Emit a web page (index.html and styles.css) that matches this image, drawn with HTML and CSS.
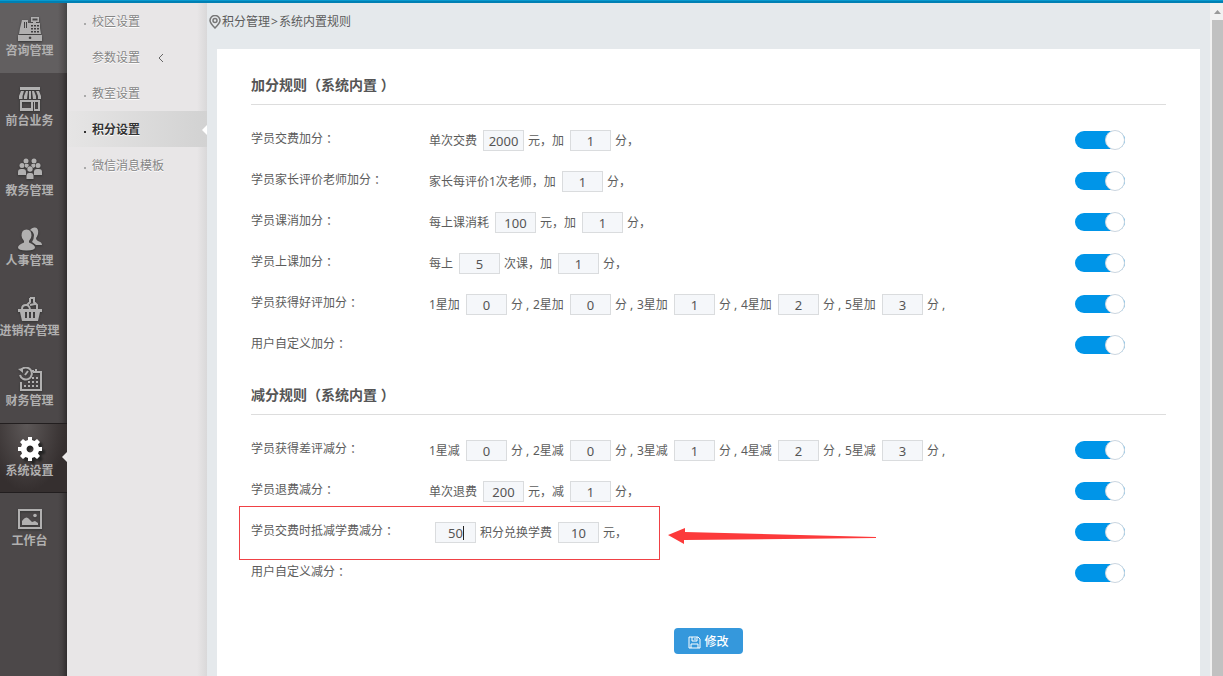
FILE: index.html
```html
<!DOCTYPE html>
<html lang="zh-CN">
<head>
<meta charset="utf-8">
<title>系统内置规则</title>
<link rel="stylesheet" href="styles.css">
</head>
<body>
<div class="topbar"></div>
<div class="app">
  <nav class="nav">
    <a class="nav-item hover" href="#"><svg viewBox="0 0 24 24"><path fill-rule="evenodd" d="M13 0h8v5h-3v1h4v5l1 6H1l1-6 2-8h6v3h5V5h-2zM14.500 1.500v2h5v-2zM6 5v6h1V5zM8 5v6h1V5zM13 8v1.500h2V8zM16 8v1.500h2V8zM19 8v1.500h2V8zM13 11v1.500h2V11zM16 11v1.500h2V11zM19 11v1.500h2V11zM13 14v1.500h2V14zM16 14v1.500h2V14zM19 14v1.500h2V14z"/><path fill-rule="evenodd" d="M0 18h24v6H0zM12 19.500a1.300 1.300 0 1 0 .1 0z"/></svg><span>咨询管理</span></a>
    <a class="nav-item" href="#"><svg viewBox="0 0 24 24"><path d="M2 0h20v3H2zM3 4h3L4.500 9v3H1V9zM8 4h2l-1 8H6V9zM11 4h2v8h-2zM14 4h2l2 5v3h-3zM18 4h3l2 5v3h-3V9z"/><path fill-rule="evenodd" d="M2 13h20v11h-6v-9h-1v9H2zM4 15v6h9v-6zM17 15v7h3v-7z"/></svg><span>前台业务</span></a>
    <a class="nav-item" href="#"><svg viewBox="0 0 24 24"><circle cx="8" cy="4" r="2.500"/><circle cx="16" cy="4" r="2.500"/><circle cx="4" cy="8.500" r="2.500"/><circle cx="20" cy="8.500" r="2.500"/><circle cx="12" cy="12" r="2.700"/><path d="M7 7h3l1 1-2 3-2-1zM14 7h3l0 3-2 1-2-3zM0 18v-3q0-3 3-3h2q3 0 3 3v3zM16 18v-3q0-3 3-3h2q3 0 3 3v3zM8.500 22v-3q0-3 2.500-3h2q2.500 0 2.500 3v3z"/></svg><span>教务管理</span></a>
    <a class="nav-item" href="#"><svg viewBox="0 0 24 24"><path d="M12 3q2-3 5-2.500 4 .5 3 6.500-1 3-2 4 0 2 2 3 4 1 4 4h-6l-4-3q2-3 2-7-1-4-4-5z"/><path d="M8.500 2.500q5 0 5 6 0 3-2.500 5.500v1.500q6 2.500 6 5 0 3-8.500 3T0 20.500q0-2.500 6-5V14Q3.500 11.500 3.500 8.500q0-6 5-6z"/></svg><span>人事管理</span></a>
    <a class="nav-item" href="#"><svg viewBox="0 0 24 24"><g fill="none" stroke="currentColor" stroke-width="2"><path d="M4 12q0-4 4-4 3 0 4 4M12 1h4v4l3 3v5M12 1v4L9 8M12 8l5-1"/></g><path fill-rule="evenodd" d="M0 12h24v3h-2l-2 9H4l-2-9H0zM7 15v6h2v-6zM11 15v6h2v-6zM15 15v6h2v-6z"/></svg><span>进销存管理</span></a>
    <a class="nav-item" href="#"><svg viewBox="0 0 24 24"><g fill="none" stroke="currentColor" stroke-width="2"><path d="M3 3a6 6 0 1 1-1 5M7 8l3-4M15 5h8v18H3v-8M18 2v4M15 3v2"/></g><path d="M0 2l5-1v5zM14 10h2v2h-2zM18 10h2v2h-2zM10 14h2v2h-2zM14 14h2v2h-2zM18 14h2v2h-2zM6 18h2v2H6zM10 18h2v2h-2zM14 18h2v2h-2zM18 18h2v2h-2z"/></svg><span>财务管理</span></a>
    <a class="nav-item active" href="#"><svg viewBox="0 0 24 24"><path fill-rule="evenodd" d="M10 0h4v3l2.500 1L19 2l3 3-2 2.500 1 2.500h3v4h-3l-1 2.500 2 2.500-3 3-2.500-2-2.500 1v3h-4v-3l-2.500-1L5 22l-3-3 2-2.500L3 14H0v-4h3l1-2.500L2 5l3-3 2.500 2L10 3zM12 8.500a3.500 3.500 0 1 0 .1 0z"/></svg><span>系统设置</span></a>
    <a class="nav-item" href="#"><svg viewBox="0 0 24 24"><path fill-rule="evenodd" d="M0 2h24v20H0zM2 4v16h20V4z"/><path d="M4 18v-4q3-5 6-3l4 4 3-1 3 2v2z"/><circle cx="17" cy="8.500" r="1.800"/></svg><span>工作台</span></a>
  </nav>
  <nav class="submenu">
    <a class="sub-item dot" href="#">校区设置</a>
    <a class="sub-item" href="#">参数设置<svg class="chevron" viewBox="0 0 6 8"><path d="M5 0L1 4 5 8"/></svg></a>
    <a class="sub-item dot" href="#">教室设置</a>
    <a class="sub-item dot active" href="#">积分设置</a>
    <a class="sub-item dot" href="#">微信消息模板</a>
  </nav>
  <main class="main">
    <div class="crumbs"><svg viewBox="0 0 12 14"><path d="M6 13Q1 8 1 5.500a5 5 0 0 1 10 0Q11 8 6 13z"/><circle cx="6" cy="5.500" r="2"/></svg><span>积分管理</span><span>&gt;</span><span>系统内置规则</span></div>
    <form class="card">
      <h2>加分规则（系统内置 ）</h2>
      <div class="row"><label class="name" for="s1">学员交费加分<span class="colon">：</span></label><div class="rule">单次交费<input value="2000" aria-label="元">元，加<input value="1" aria-label="分">分，</div><input class="switch" type="checkbox" id="s1" checked></div>
      <div class="row"><label class="name" for="s2">学员家长评价老师加分<span class="colon">：</span></label><div class="rule">家长每评价1次老师，加<input value="1" aria-label="分">分，</div><input class="switch" type="checkbox" id="s2" checked></div>
      <div class="row"><label class="name" for="s3">学员课消加分<span class="colon">：</span></label><div class="rule">每上课消耗<input value="100" aria-label="元">元，加<input value="1" aria-label="分">分，</div><input class="switch" type="checkbox" id="s3" checked></div>
      <div class="row"><label class="name" for="s4">学员上课加分<span class="colon">：</span></label><div class="rule">每上<input value="5" aria-label="次课">次课，加<input value="1" aria-label="分">分，</div><input class="switch" type="checkbox" id="s4" checked></div>
      <div class="row"><label class="name" for="s5">学员获得好评加分<span class="colon">：</span></label><div class="rule stars"><span>1星加<input value="0" aria-label="1星">分 ,</span><span>2星加<input value="0" aria-label="2星">分 ,</span><span>3星加<input value="1" aria-label="3星">分 ,</span><span>4星加<input value="2" aria-label="4星">分 ,</span><span>5星加<input value="3" aria-label="5星">分 ,</span></div><input class="switch" type="checkbox" id="s5" checked></div>
      <div class="row"><label class="name" for="s6">用户自定义加分<span class="colon">：</span></label><div class="rule"></div><input class="switch" type="checkbox" id="s6" checked></div>

      <h2>减分规则（系统内置 ）</h2>
      <div class="row"><label class="name" for="s7">学员获得差评减分<span class="colon">：</span></label><div class="rule stars"><span>1星减<input value="0" aria-label="1星">分 ,</span><span>2星减<input value="0" aria-label="2星">分 ,</span><span>3星减<input value="1" aria-label="3星">分 ,</span><span>4星减<input value="2" aria-label="4星">分 ,</span><span>5星减<input value="3" aria-label="5星">分 ,</span></div><input class="switch" type="checkbox" id="s7" checked></div>
      <div class="row"><label class="name" for="s8">学员退费减分<span class="colon">：</span></label><div class="rule">单次退费<input value="200" aria-label="元">元，减<input value="1" aria-label="分">分，</div><input class="switch" type="checkbox" id="s8" checked></div>
      <div class="row marked"><label class="name" for="s9">学员交费时抵减学费减分<span class="colon">：</span></label><div class="rule"><span class="editing"><input value="50" aria-label="积分"></span>积分兑换学费<input value="10" aria-label="元">元，</div><input class="switch" type="checkbox" id="s9" checked><svg class="arrow" viewBox="0 0 208 16"><path d="M0 7L17 0V4L208 9V10L16 12V16z"/></svg></div>
      <div class="row"><label class="name" for="s10">用户自定义减分<span class="colon">：</span></label><div class="rule"></div><input class="switch" type="checkbox" id="s10" checked></div>
      <div class="actions"><button class="save" type="button"><svg viewBox="0 0 13 13"><path d="M1 1h9l2 2v9H1zM4 1v4h5V1M3 12V8h7v4M7 2v2"/></svg>修改</button></div>
    </form>
  </main>
  <div class="scrollbar"><svg viewBox="0 0 7 4"><path d="M0 4L3.500 0 7 4z"/></svg><div class="thumb"></div></div>
</div>
</body>
</html>
```
FILE: styles.css
```css
*, *::before, *::after { box-sizing: border-box; }
body {
  margin: 0;
  height: 100vh;
  overflow: hidden;
  display: flex;
  flex-direction: column;
  font: 12px/18px "Noto Sans", "Noto Sans CJK SC", sans-serif;
  color: #5c5c5c;
}
a { color: inherit; text-decoration: none; }
.topbar { height: 3px; flex: none; background: linear-gradient(#0899cf 1px, #0080b3 1px); }
.app { flex: 1; min-height: 0; display: grid; grid-template-columns: 67px 140px 1fr 13px; }

.nav {
  position: relative;
  z-index: 1;
  background: linear-gradient(90deg, #4c4849 58px, #454142 62px, #302d2e);
}
.nav-item {
  position: relative;
  display: flex;
  flex-direction: column;
  align-items: center;
  gap: 1px;
  height: 70px;
  padding: 14px 8px 0 0;
  color: #b1b0b0;
  font-weight: bold;
  white-space: nowrap;
}
.nav-item svg { width: 24px; height: 24px; fill: currentColor; flex: none; filter: drop-shadow(0 1px 1px #333); }
.nav-item.hover { background: linear-gradient(90deg, #625f60 58px, #555152 63px, #444); }
.nav-item.active {
  padding-top: 13px;
  background: radial-gradient(ellipse at 40% 0, #5d5858, #352f2f 70%);
  border-top: 1px solid #221e1f;
  border-bottom: 1px solid #221e1f;
}
.nav-item.active svg { color: #fff; filter: drop-shadow(3px 3px 1px #222); }
.nav-item.active::after {
  content: "";
  position: absolute;
  right: 0;
  top: 28px;
  border: 5px solid transparent;
  border-left: 0;
  border-right-color: #eceaea;
}

.submenu { background: linear-gradient(90deg, #e8e6e7 130px, #d9d8d9); color: #858585; }
.sub-item { position: relative; display: flex; align-items: center; gap: 18px; height: 36px; padding: 2px 0 0 25px; text-shadow: 0 1px #fff; }
.sub-item.dot::before { content: ""; position: absolute; left: 17px; top: 20px; width: 2px; height: 2px; background: #aaa; }
.sub-item.active { background: linear-gradient(90deg, #e6e5e5, #d2d2d2); color: #333; font-weight: bold; }
.sub-item.active.dot::before { background: #333; }
.sub-item.active::after { content: ""; position: absolute; right: 0; top: 14px; border: 5px solid transparent; border-left: 0; border-right-color: #fff; }
.chevron { width: 6px; height: 8px; fill: none; stroke: #666; }

.main { background: #e5e9ec; padding: 10px 10px 0 2px; display: flex; flex-direction: column; min-width: 0; }
.crumbs { display: flex; align-items: center; gap: 1px; height: 18px; }
.crumbs svg { width: 12px; height: 14px; fill: none; stroke: #777; stroke-width: 1.5; }
.card { flex: 1; margin: 18px 0 0 8px; padding: 26px 34px 0; background: #fff; }
h2 { margin: 0 0 15px; height: 30px; border-bottom: 1px solid #ddd; font-size: 14px; line-height: 20px; color: #555; }
.row + h2 { margin-top: 19px; }
.row { position: relative; display: grid; grid-template-columns: 178px 1fr 50px; align-items: center; height: 41px; padding-right: 41px; }
.name { padding-bottom: 4px; }
.colon { padding-left: 3px; }
.rule { display: flex; align-items: center; white-space: nowrap; }
.rule input {
  width: 41px;
  height: 21px;
  margin: 0 4px 0 6px;
  padding: 1px 0 0;
  border: 1px solid #dadcde;
  background: #f5f7fa;
  color: #555;
  font: 13px/18px "Noto Sans", sans-serif;
  text-align: center;
}
.stars span { display: flex; align-items: center; width: 104px; }
.editing { position: relative; display: flex; }
.editing::after { content: ""; position: absolute; left: 34px; top: 4px; width: 1px; height: 14px; background: #222; }
.switch { appearance: none; position: relative; width: 50px; height: 18px; margin: 0 0 2px; border-radius: 9px; background: #0095e8; }
.switch::after { content: ""; position: absolute; right: 0; top: -1px; width: 20px; height: 20px; border: 1px solid #ccd6df; border-radius: 50%; background: #fff; }
.switch:not(:checked) { background: #ccc; }
.switch:not(:checked)::after { right: auto; left: 0; }
.marked::before { content: ""; position: absolute; left: -12px; top: -6px; width: 421px; height: 54px; border: 1px solid #f04145; pointer-events: none; }
.arrow { position: absolute; left: 417px; top: 16px; width: 208px; height: 16px; fill: #fc3a3b; }
.actions { display: flex; justify-content: center; padding-top: 34px; }
.save { display: flex; align-items: center; justify-content: center; gap: 3px; width: 69px; height: 26px; padding: 2px 0 0; border: 0; border-radius: 4px; background: #3598dc; color: #fff; font: 500 12px/18px "Noto Sans", "Noto Sans CJK SC", sans-serif; }
.save svg { width: 13px; height: 13px; fill: none; stroke: #fff; }

.scrollbar { display: flex; flex-direction: column; align-items: center; padding: 7px 0 0 2px; background: #f1f1f1; }
.scrollbar svg { width: 7px; height: 4px; fill: #999; flex: none; margin-bottom: 6px; }
.thumb { flex: 1; width: 100%; background: #c1c1c1; }
```
